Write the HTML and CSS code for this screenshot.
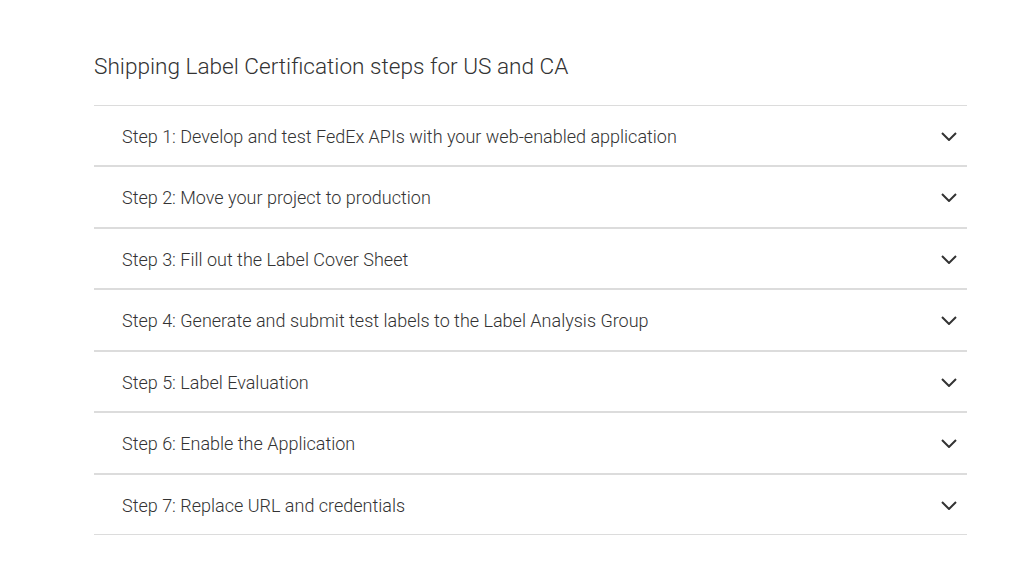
FILE: index.html
```html
<!DOCTYPE html>
<html>
	<head>
		<meta charset="UTF-8">
		<title>Shipping Label Certification</title>
		<link rel="stylesheet" href="styles.css">
	</head>
	<body>
		<div class="wrap">
			<h2 class="title">Shipping Label Certification steps for US and CA</h2>
			<ul class="steps">
				<li class="step"><span>Step 1: Develop and test FedEx APIs with your web-enabled application</span><svg class="chev" viewBox="0 0 16 9"><path d="M1 1l7 7 7-7"/></svg></li>
				<li class="step"><span>Step 2: Move your project to production</span><svg class="chev" viewBox="0 0 16 9"><path d="M1 1l7 7 7-7"/></svg></li>
				<li class="step"><span>Step 3: Fill out the Label Cover Sheet</span><svg class="chev" viewBox="0 0 16 9"><path d="M1 1l7 7 7-7"/></svg></li>
				<li class="step"><span>Step 4: Generate and submit test labels to the Label Analysis Group</span><svg class="chev" viewBox="0 0 16 9"><path d="M1 1l7 7 7-7"/></svg></li>
				<li class="step"><span>Step 5: Label Evaluation</span><svg class="chev" viewBox="0 0 16 9"><path d="M1 1l7 7 7-7"/></svg></li>
				<li class="step"><span>Step 6: Enable the Application</span><svg class="chev" viewBox="0 0 16 9"><path d="M1 1l7 7 7-7"/></svg></li>
				<li class="step"><span>Step 7: Replace URL and credentials</span><svg class="chev" viewBox="0 0 16 9"><path d="M1 1l7 7 7-7"/></svg></li>
			</ul>
		</div>
	</body>
</html>
```

FILE: styles.css
```css
* {
	margin: 0;
	padding: 0;
	box-sizing: border-box;
}
ul, li {
	list-style: none;
}
body {
	background: #fff;
	font-family: Roboto, "Liberation Sans", sans-serif;
	color: #333;
}

.wrap {
	width: 873px;
	margin-left: 94px;
	padding-top: 52px;
}

.title {
	font-size: 22.6px;
	font-weight: 300;
	line-height: 30px;
	color: #333;
	margin-bottom: 23px;
}

.step {
	display: flex;
	align-items: center;
	justify-content: space-between;
	padding: 19.9px 10px 18.55px 28px;
	border-top: 1px solid #dcdcdc;
	border-bottom: 1px solid #dcdcdc;
	font-size: 18px;
	font-weight: 300;
	line-height: 21px;
	color: #333;
}

.chev {
	width: 16px;
	height: 9px;
	fill: none;
	stroke: #333;
	stroke-width: 2;
}
```
